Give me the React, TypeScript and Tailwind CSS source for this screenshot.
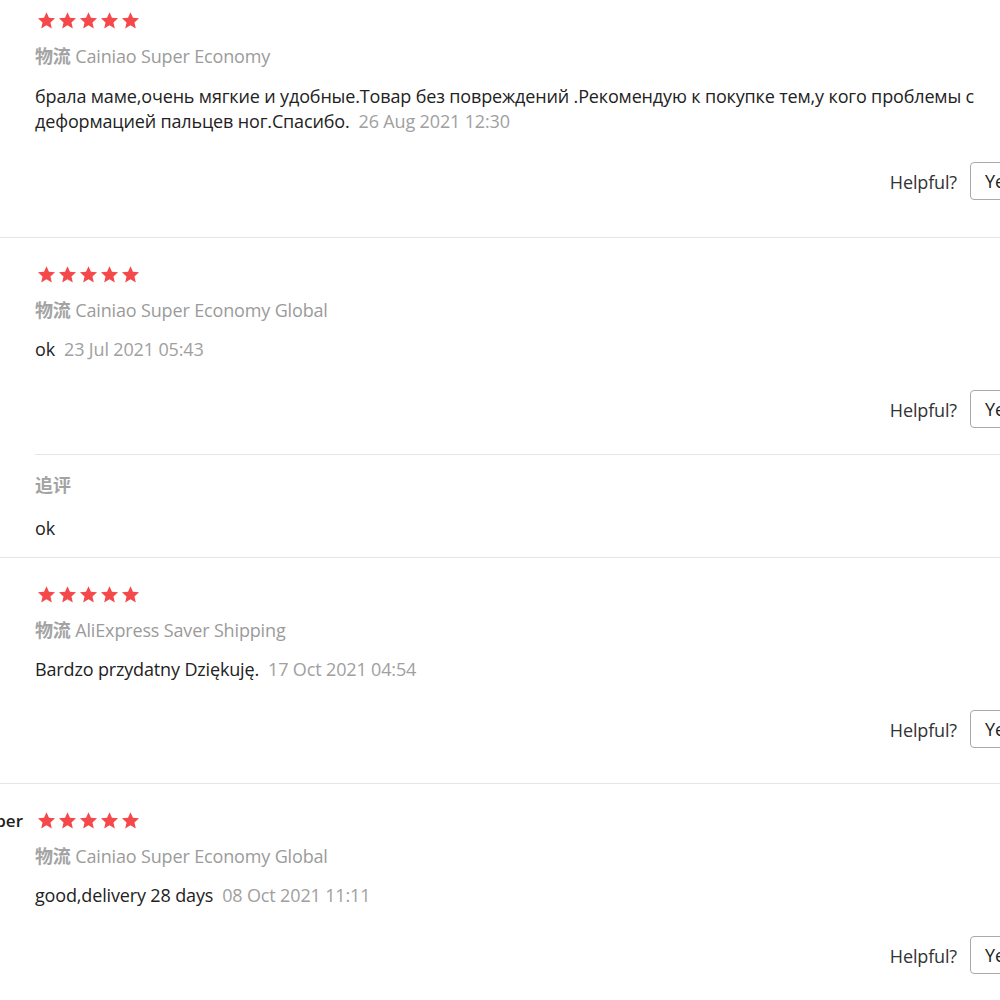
import React from "react";

type Review = {
  user?: string;
  logistics: string;
  text: React.ReactNode;
  date: string;
  followUp?: string;
};

const reviews: Review[] = [
  {
    logistics: "Cainiao Super Economy",
    text: (
      <>
        брала маме,очень мягкие и удобные.Товар без повреждений .Рекомендую к покупке тем,у кого проблемы с
        <br />
        деформацией пальцев ног.Спасибо.
      </>
    ),
    date: "26 Aug 2021 12:30",
  },
  {
    logistics: "Cainiao Super Economy Global",
    text: "ok",
    date: "23 Jul 2021 05:43",
    followUp: "ok",
  },
  {
    logistics: "AliExpress Saver Shipping",
    text: "Bardzo przydatny Dziękuję.",
    date: "17 Oct 2021 04:54",
  },
  {
    user: "AliExpress Shopper",
    logistics: "Cainiao Super Economy Global",
    text: "good,delivery 28 days",
    date: "08 Oct 2021 11:11",
  },
];

function Stars() {
  return (
    <div className="ml-[2px] flex h-[18px] items-center gap-[2px]">
      {[0, 1, 2, 3, 4].map((i) => (
        <svg key={i} width="19" height="19" viewBox="0 0 24 24">
          <path
            d="M12 1.5l3.1 7.1 7.7.7-5.8 5.1 1.7 7.6L12 18l-6.7 4 1.7-7.6L1.2 9.3l7.7-.7z"
            fill="#f5484a"
          />
        </svg>
      ))}
    </div>
  );
}

function ReviewItem({ r, first }: { r: Review; first: boolean }) {
  return (
    <div className="border-t border-[#e6e6e6] first:border-t-0">
      <div className="flex">
        <div className="flex w-[35px] shrink-0 justify-end pr-[12px]">
          {r.user && (
            <div className="mt-[28px] whitespace-nowrap text-[17px] leading-[18px] font-semibold text-[#222]">
              {r.user}
            </div>
          )}
        </div>
        <div className="flex-1 text-[18px] tracking-[-0.15px]">
          <div className={first ? "pt-[11px]" : "pt-[27px]"}>
            <Stars />
          </div>
          <div className="mt-[14px] h-[26px] leading-[26px] text-[#9b9b9b]">
            <span className="font-semibold text-[#a3a3a3]">物流</span> {r.logistics}
          </div>
          <div className={`${first ? "mt-[15px]" : "mt-[14px]"} whitespace-nowrap leading-[25px] text-[#222]`}>
            {r.text}
            <span className="ml-[9px] text-[#a0a0a0]">{r.date}</span>
          </div>
          <div className="mt-[28px] flex items-center justify-end gap-[13px]">
            <span className="pt-[3px] text-[#333]">Helpful?</span>
            <button className="h-[38px] w-[60px] rounded-[4px] border border-[#a9a9a9] bg-white pl-[14px] text-left text-[#222]">
              Yes
            </button>
          </div>
          <div className={r.followUp ? "h-[26px]" : first ? "h-[37px]" : "h-[35px]"} />
        </div>
      </div>
      {r.followUp && (
        <div className="ml-[35px] border-t border-[#e6e6e6] pt-[17px] pb-[16px] text-[18px]">
          <div className="h-[26px] leading-[26px] font-semibold text-[#a3a3a3]">追评</div>
          <div className="mt-[18px] leading-[25px] text-[#222]">{r.followUp}</div>
        </div>
      )}
    </div>
  );
}

export default function App() {
  return (
    <div
      className="h-[1000px] w-[1000px] overflow-hidden bg-white"
      style={{ fontFamily: '"Open Sans", "Noto Sans CJK SC", sans-serif' }}
    >
      <div className="w-[1030px]">
        {reviews.map((r, i) => (
          <ReviewItem key={i} r={r} first={i === 0} />
        ))}
      </div>
    </div>
  );
}
